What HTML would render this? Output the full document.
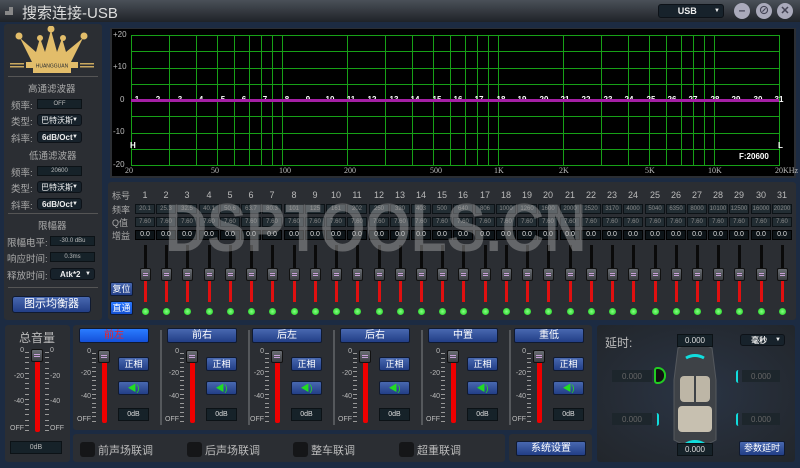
<!DOCTYPE html>
<html><head><meta charset="utf-8">
<style>
*{margin:0;padding:0;box-sizing:border-box}
body{width:800px;height:468px;overflow:hidden;background:#1c2b42;font-family:"Liberation Sans","Noto Sans CJK SC",sans-serif;position:relative;color:#ccc}
.a{position:absolute}
.panel{position:absolute;background:#2b2e33;border-radius:3px}
.inp{position:absolute;background:#162229;border:1px solid #0c1216;color:#bbb;font-size:7px;text-align:center;line-height:11px}
.dd{position:absolute;background:#17222b;border:1px solid #0d1218;border-radius:3px;color:#eee;font-size:8px;font-weight:bold;text-align:center;line-height:11px}
.dd:after{content:"▼";position:absolute;right:3px;font-size:6px}
.btn{position:absolute;background:linear-gradient(#4868b0,#223e86);border:1px solid #101a30;border-radius:2px;color:#fff;font-size:10px;text-align:center}
.lbl{position:absolute;font-size:9.5px;color:#aaa}
.gl{position:absolute;background:#17a017}
</style></head><body>
<div class="a" style="left:0;top:0;width:800px;height:22px;background:linear-gradient(#4a5058,#1f2328)"></div>
<div class="a" style="left:5px;top:6px;width:10px;height:10px;font-size:8px;color:#888">▟</div>
<div class="a" style="left:22px;top:2px;font-size:15px;color:#ddd">搜索连接-USB</div>
<div class="dd" style="left:658px;top:4px;width:66px;height:14px;line-height:12px;font-size:9px">USB&nbsp;&nbsp;&nbsp;</div>
<div class="a" style="left:734px;top:3px;width:16px;height:16px;border-radius:50%;background:#aab;color:#445;font-size:12px;text-align:center;line-height:15px;font-weight:bold">–</div>
<div class="a" style="left:756px;top:3px;width:16px;height:16px;border-radius:50%;background:#aab;color:#445;font-size:11px;text-align:center;line-height:16px;font-weight:bold">⊘</div>
<div class="a" style="left:777px;top:3px;width:16px;height:16px;border-radius:50%;background:#aab;color:#445;font-size:11px;text-align:center;line-height:16px;font-weight:bold">✕</div>

<div class="panel" style="left:4px;top:24px;width:98px;height:296px"></div>
<svg class="a" style="left:8px;top:26px" width="90" height="50">
<path d="M12 12 L25 38 L62 38 L75 12 L58 26 L54 12 L49 26 L43 4 L37 26 L32 12 L28 26 Z" fill="#e2bd6a"/>
<circle cx="11" cy="10" r="3.5" fill="#e2bd6a"/><circle cx="32" cy="12" r="3" fill="#e2bd6a"/><circle cx="43" cy="3" r="3.5" fill="#e2bd6a"/><circle cx="55" cy="12" r="3" fill="#e2bd6a"/><circle cx="76" cy="10" r="3.5" fill="#e2bd6a"/>
<rect x="18" y="36" width="52" height="6" fill="#e2bd6a"/><text x="44" y="41.5" font-size="5" fill="#2b2e33" text-anchor="middle" font-family="Liberation Sans">HUANGGUAN</text>
<rect x="25" y="42" width="38" height="5" fill="#e2bd6a"/>
<rect x="2" y="37" width="14" height="1.5" fill="#c9a85f"/><rect x="2" y="40" width="14" height="1.5" fill="#c9a85f"/><rect x="72" y="37" width="14" height="1.5" fill="#c9a85f"/><rect x="72" y="40" width="14" height="1.5" fill="#c9a85f"/>
</svg>
<div class="a" style="left:8px;top:76px;width:90px;height:1px;background:#555"></div>
<div class="lbl" style="left:28px;top:81px">高通滤波器</div>
<div class="lbl" style="left:11px;top:98px">频率:</div><div class="inp" style="left:37px;top:99px;width:45px;height:10px;line-height:8px;font-size:6px">OFF</div>
<div class="lbl" style="left:11px;top:114px">类型:</div><div class="dd" style="left:37px;top:114px;width:45px;height:12px;font-weight:normal;text-align:left;padding-left:3px">巴特沃斯</div>
<div class="lbl" style="left:11px;top:131px">斜率:</div><div class="dd" style="left:37px;top:131px;width:45px;height:12px">6dB/Oct&nbsp;&nbsp;</div>
<div class="lbl" style="left:29px;top:148px">低通滤波器</div>
<div class="lbl" style="left:11px;top:165px">频率:</div><div class="inp" style="left:37px;top:166px;width:45px;height:10px;line-height:8px;font-size:6px">20600</div>
<div class="lbl" style="left:11px;top:181px">类型:</div><div class="dd" style="left:37px;top:181px;width:45px;height:12px;font-weight:normal;text-align:left;padding-left:3px">巴特沃斯</div>
<div class="lbl" style="left:11px;top:198px">斜率:</div><div class="dd" style="left:37px;top:198px;width:45px;height:12px">6dB/Oct&nbsp;&nbsp;</div>
<div class="a" style="left:8px;top:213px;width:90px;height:1px;background:#555"></div>
<div class="lbl" style="left:38px;top:218px">限幅器</div>
<div class="lbl" style="left:7px;top:235px">限幅电平:</div><div class="inp" style="left:50px;top:236px;width:45px;height:10px;line-height:8px;font-size:6px">-30.0 dBu</div>
<div class="lbl" style="left:7px;top:251px">响应时间:</div><div class="inp" style="left:50px;top:252px;width:45px;height:10px;line-height:8px;font-size:6px">0.3ms</div>
<div class="lbl" style="left:7px;top:268px">释放时间:</div><div class="dd" style="left:50px;top:268px;width:45px;height:12px">Atk*2&nbsp;&nbsp;</div>
<div class="a" style="left:8px;top:287px;width:90px;height:1px;background:#555"></div>
<div class="btn" style="left:12px;top:296px;width:79px;height:17px;line-height:15px;font-size:11px;border-radius:3px">图示均衡器</div>

<div class="a" style="left:110px;top:28px;width:686px;height:150px;background:#2b2e33"></div>
<div class="a" style="left:112px;top:29px;width:682px;height:147px;background:#000"></div>
<div id="g"></div>
<div class="a" style="left:131px;top:99px;width:648px;height:3px;background:#a51fa5"></div>

<div class="panel" style="left:108px;top:182px;width:688px;height:138px"></div>
<div id="eq"></div>
<div class="btn" style="left:110px;top:282px;width:23px;height:14px;font-size:9px;line-height:12px">复位</div>
<div class="btn" style="left:110px;top:301px;width:23px;height:14px;font-size:9px;line-height:12px;background:linear-gradient(#2a78ff,#1450d0)">直通</div>
<div class="a" style="left:165px;top:190px;font-size:68px;font-weight:bold;color:rgba(170,170,170,0.45);line-height:76px;transform:scaleX(0.86);transform-origin:0 0;white-space:nowrap">DSPTOOLS.CN</div>

<div class="panel" style="left:5px;top:325px;width:65px;height:137px"></div>
<div class="a" style="left:19px;top:329px;font-size:12px;color:#bbb">总音量</div>
<div class="inp" style="left:10px;top:441px;width:52px;height:13px;line-height:11px">0dB</div>
<div class="panel" style="left:73px;top:325px;width:519px;height:105px"></div>
<div class="panel" style="left:73px;top:434px;width:432px;height:28px"></div>
<div class="panel" style="left:509px;top:434px;width:83px;height:28px"></div>
<div id="ch"></div>
<div class="btn" style="left:516px;top:441px;width:70px;height:15px;line-height:13px">系统设置</div>

<div class="panel" style="left:597px;top:325px;width:198px;height:137px;background:radial-gradient(ellipse at 50% 50%,#2a3444,#22262b)"></div>
<div class="a" style="left:605px;top:334px;font-size:12px;color:#bbb">延时:</div>
<div class="dd" style="left:740px;top:334px;width:45px;height:12px">毫秒&nbsp;&nbsp;&nbsp;</div>
<svg class="a" style="left:660px;top:340px" width="70" height="115">
<path d="M18 8 Q35 0 52 8 L56 40 L56 100 Q35 112 14 100 L14 40 Z" fill="#3e4247" stroke="#55595e"/>
<rect x="20" y="36" width="30" height="26" rx="4" fill="#bdb6a6"/>
<rect x="18" y="66" width="34" height="26" rx="4" fill="#c7c0b0"/>
<rect x="34" y="34" width="2" height="30" fill="#3e4247"/>
<path d="M26 18 Q35 13 44 18" stroke="#1dd" stroke-width="3" fill="none"/>
<path d="M26 104 Q35 99 44 104" stroke="#1dd" stroke-width="3" fill="none"/>
</svg>
<div class="a" style="left:654px;top:367px;width:12px;height:17px;border:2px solid #2c2;border-radius:3px 8px 8px 3px;background:#111"></div>
<div class="a" style="left:736px;top:370px;width:5px;height:13px;border-left:2px solid #1dd;border-radius:5px"></div>
<div class="a" style="left:654px;top:413px;width:5px;height:13px;border-right:2px solid #1dd;border-radius:5px"></div>
<div class="a" style="left:736px;top:413px;width:5px;height:13px;border-left:2px solid #1dd;border-radius:5px"></div>
<div class="inp" style="left:677px;top:334px;width:36px;height:13px;color:#ddd;font-size:8px">0.000</div>
<div class="inp" style="left:677px;top:443px;width:36px;height:13px;color:#ddd;font-size:8px">0.000</div>
<div class="inp" style="left:612px;top:370px;width:40px;height:12px;color:#666;font-size:8px;background:#1d262c;border-color:#1d262c">0.000</div>
<div class="inp" style="left:612px;top:413px;width:40px;height:12px;color:#666;font-size:8px;background:#1d262c;border-color:#1d262c">0.000</div>
<div class="inp" style="left:742px;top:370px;width:38px;height:12px;color:#666;font-size:8px;background:#1d262c;border-color:#1d262c">0.000</div>
<div class="inp" style="left:742px;top:413px;width:38px;height:12px;color:#666;font-size:8px;background:#1d262c;border-color:#1d262c">0.000</div>
<div class="btn" style="left:739px;top:441px;width:46px;height:15px;line-height:13px;font-size:9px">参数延时</div>

<script>
var h='';
function lx(f){return 131+216*Math.log10(f/20);}
var fs=[20,30,40,50,60,70,80,90,100,200,300,400,500,600,700,800,900,1000,2000,3000,4000,5000,6000,7000,8000,9000,10000,20000];
fs.forEach(function(f){h+='<div class="gl" style="left:'+Math.round(lx(f))+'px;top:35px;width:1px;height:130px"></div>';});
for(var i=0;i<9;i++){h+='<div class="gl" style="left:131px;top:'+Math.round(35+i*16.25)+'px;width:649px;height:1px"></div>';}
[['+20',35],['+10',67],['0',100],['-10',132],['-20',165]].forEach(function(a){h+='<div class="a" style="left:'+(a[0]=='0'?120:113)+'px;top:'+(a[1]-5)+'px;font-size:8px;color:#bbb">'+a[0]+'</div>';});
[['20',131],['50',217],['100',285],['200',350],['500',436],['1K',500],['2K',565],['5K',651],['10K',714],['20KHz',781]].forEach(function(a){h+='<div class="a" style="left:'+(a[1]-6)+'px;top:166px;font-family:Liberation Serif;font-size:8px;color:#bbb">'+a[0]+'</div>';});
for(var i=1;i<=31;i++){h+='<div class="a" style="left:'+Math.round(136+(i-1)*21.4-4)+'px;top:95px;font-size:8px;font-weight:bold;color:#fff;width:10px;text-align:center">'+i+'</div>';}
h+='<div class="a" style="left:130px;top:141px;font-size:8px;font-weight:bold;color:#fff">H</div><div class="a" style="left:778px;top:141px;font-size:8px;font-weight:bold;color:#fff">L</div><div class="a" style="left:739px;top:152px;font-size:8px;font-weight:bold;color:#fff">F:20600</div>';
document.getElementById('g').innerHTML=h;
h='';
var fr='20.1 25.3 32.5 40.1 50.6 63.7 80.3 101 125 161 202 250 320 403 500 640 806 1000 1260 1600 2000 2520 3170 4000 5040 6350 8000 10100 12500 16000 20200'.split(' ');
[['标号',189],['频率',203],['Q值',216],['增益',229]].forEach(function(a){h+='<div class="a" style="left:112px;top:'+a[1]+'px;font-size:9px;color:#aaa">'+a[0]+'</div>';});
for(var i=0;i<31;i++){var x=Math.round(145+i*21.23);
h+='<div class="a" style="left:'+(x-8)+'px;top:190px;width:16px;text-align:center;font-size:9px;color:#bbb">'+(i+1)+'</div>';
h+='<div class="inp" style="left:'+(x-10)+'px;top:204px;width:20px;height:10px;line-height:8px;font-size:6px;color:#888;background:#222d33">'+fr[i]+'</div>';
h+='<div class="inp" style="left:'+(x-10)+'px;top:217px;width:20px;height:10px;line-height:8px;font-size:6px;color:#888;background:#222d33">7.60</div>';
h+='<div class="inp" style="left:'+(x-10)+'px;top:230px;width:20px;height:10px;line-height:8px;font-size:7px;color:#ddd;background:#0d1418;border-color:#000">0.0</div>';
h+='<div class="a" style="left:'+(x-1)+'px;top:245px;width:3px;height:24px;background:#0a0a0a"></div>';
h+='<div class="a" style="left:'+(x-1)+'px;top:281px;width:3px;height:21px;background:#e01010"></div>';
h+='<div class="a" style="left:'+(x-5)+'px;top:268px;width:11px;height:13px;background:linear-gradient(#6b6f75,#3b3e42);border:1px solid #111;border-radius:2px"><div style="margin:4px 2px;height:3px;border-top:1px solid #c8a0d8;border-bottom:1px solid #c8a0d8"></div></div>';
h+='<div class="a" style="left:'+(x-3)+'px;top:308px;width:7px;height:7px;border-radius:50%;background:radial-gradient(#8f8,#1c1)"></div>';}
document.getElementById('eq').innerHTML=h;
h='';
function slider(tx,ty,len,both){var s='';
s+='<div class="a" style="left:'+(tx-1)+'px;top:'+(ty+6)+'px;width:5px;height:'+(len-6)+'px;background:#e00;border-radius:2px"></div>';
s+='<div class="a" style="left:'+(tx-5)+'px;top:'+(ty-3)+'px;width:12px;height:13px;background:linear-gradient(#6b6f75,#3b3e42);border:1px solid #111;border-radius:2px"><div style="margin:4px 2px;height:3px;border-top:1px solid #c8a0d8;border-bottom:1px solid #c8a0d8"></div></div>';
var labs=[['0',0],['-20',0.32],['-40',0.64],['OFF',0.97]];
for(var k=0;k<=15;k++){var yy=Math.round(ty+k*(len-2)/15);s+='<div class="a" style="left:'+(tx-11)+'px;top:'+yy+'px;width:4px;height:1px;background:#999"></div>';if(both)s+='<div class="a" style="left:'+(tx+9)+'px;top:'+yy+'px;width:4px;height:1px;background:#999"></div>';}
labs.forEach(function(l){var yy=Math.round(ty+l[1]*len);s+='<div class="a" style="left:'+(tx-40)+'px;top:'+(yy-5)+'px;width:28px;text-align:right;font-size:7px;color:#bbb">'+l[0]+'</div>';if(both)s+='<div class="a" style="left:'+(tx+14)+'px;top:'+(yy-5)+'px;font-size:7px;color:#bbb">'+l[0]+'</div>';});
return s;}
h+=slider(36,352,80,true);
var nm=['前左','前右','后左','后右','中置','重低'],bx=[79,167,252,340,428,514];
for(var i=0;i<6;i++){var b=bx[i];
h+='<div class="btn" style="left:'+b+'px;top:328px;width:70px;height:15px;line-height:13px;'+(i==0?'background:linear-gradient(#2a7cff,#1450d8);color:#e22':'')+'">'+nm[i]+'</div>';
h+=slider(b+24,353,70,false);
h+='<div class="btn" style="left:'+(b+39)+'px;top:357px;width:31px;height:14px;line-height:12px;font-size:9px">正相</div>';
h+='<div class="btn" style="left:'+(b+39)+'px;top:381px;width:31px;height:14px;line-height:12px;font-size:9px;color:#2d2">◀)</div>';
h+='<div class="inp" style="left:'+(b+39)+'px;top:408px;width:31px;height:13px;line-height:11px;font-size:7px;color:#ddd">0dB</div>';
if(i<5)h+='<div class="a" style="left:'+(b+81)+'px;top:330px;width:2px;height:95px;background:#55585c"></div>';}
[['前声场联调',80],['后声场联调',187],['整车联调',293],['超重联调',399]].forEach(function(a){h+='<div class="a" style="left:'+a[1]+'px;top:442px;width:15px;height:15px;background:#151618;border-radius:3px"></div><div class="a" style="left:'+(a[1]+18)+'px;top:442px;font-size:11px;color:#bbb">'+a[0]+'</div>';});
document.getElementById('ch').innerHTML=h;
</script>
</body></html>
